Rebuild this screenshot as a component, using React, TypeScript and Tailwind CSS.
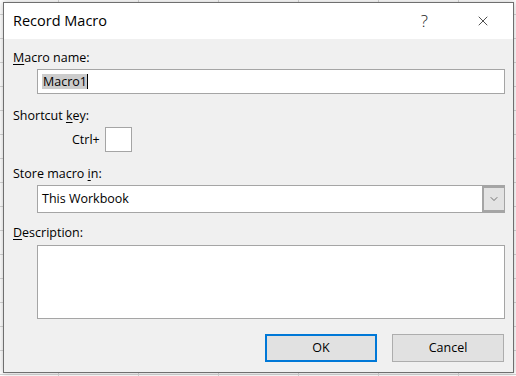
import { ChevronDown, X } from 'lucide-react';

const FONT = "font-['Segoe_UI','Open_Sans','Noto_Sans',sans-serif]";

const Label = ({ before, accel, after, className }: { before?: string; accel: string; after: string; className?: string }) => (
  <div className={`h-4 text-[12.5px] leading-4 text-black ${className ?? ''}`}>
    {before}
    <span className="underline underline-offset-2">{accel}</span>
    {after}
  </div>
);

export default function App() {
  return (
    <div
      className={`${FONT} h-[376px] w-[516px] overflow-hidden bg-white bg-[image:linear-gradient(to_right,#d6d6d6_1px,transparent_1px),linear-gradient(to_bottom,#d6d6d6_1px,transparent_1px)] bg-[size:80px_24px] bg-[position:58px_14px] pl-[3px] pt-[2px]`}
    >
      <div className="flex h-[371px] w-[511px] flex-col border border-[#6f6f6f] bg-[#f0f0f0] shadow-[0_0_6px_rgba(0,0,0,0.25)]">
        {/* title bar */}
        <div className="flex h-[36px] shrink-0 items-center bg-white pl-[9px] pr-[22px]">
          <span className="text-[14.5px] text-black">Record Macro</span>
          <span className="ml-auto text-[17px] font-light text-[#222]">?</span>
          <X className="ml-[47px] size-[16px] text-[#222]" strokeWidth={1.2} />
        </div>

        {/* body */}
        <div className="flex flex-col pl-[9px] pr-[8px]">
          <Label accel="M" after="acro name:" className="mt-[11px]" />
          <div className="ml-[24px] mt-[3px] flex h-[25px] items-center border border-[#a5a5a5] bg-white pl-[4px]">
            <span className="bg-[#cccccc] pl-px text-[12.5px] leading-[15px] text-black">Macro1</span>
            <span className="h-[15px] w-px bg-black" />
          </div>

          <Label before="Shortcut " accel="k" after="ey:" className="mt-[14px]" />
          <div className="ml-[59px] mt-[3px] flex items-center gap-[5px]">
            <span className="text-[12.5px] leading-4 text-black">Ctrl+</span>
            <div className="h-[25px] w-[27px] border border-[#a5a5a5] bg-white" />
          </div>

          <Label before="Store macro " accel="i" after="n:" className="mt-[14px]" />
          <div className="ml-[24px] mt-[3px] flex h-[28px] border border-[#a5a5a5] bg-white">
            <div className="flex flex-1 items-center pl-[4px] text-[12.5px] text-black">This Workbook</div>
            <div className="flex w-[22px] items-center justify-center border-2 border-r-0 border-[#a5a5a5] bg-[#e3e3e3]">
              <ChevronDown className="size-[12px] text-[#333]" strokeWidth={1.3} />
            </div>
          </div>

          <Label accel="D" after="escription:" className="mt-[12px]" />
          <div className="ml-[24px] mt-[4px] h-[74px] border border-[#a5a5a5] bg-white" />

          <div className="mt-[15px] flex justify-end gap-[15px] pr-px">
            <button className="h-[28px] w-[112px] border-2 border-[#0078d7] bg-[#e1e1e1] text-[12.5px] text-black">OK</button>
            <button className="h-[28px] w-[112px] border border-[#adadad] bg-[#e1e1e1] text-[12.5px] text-black">Cancel</button>
          </div>
        </div>
      </div>
    </div>
  );
}
